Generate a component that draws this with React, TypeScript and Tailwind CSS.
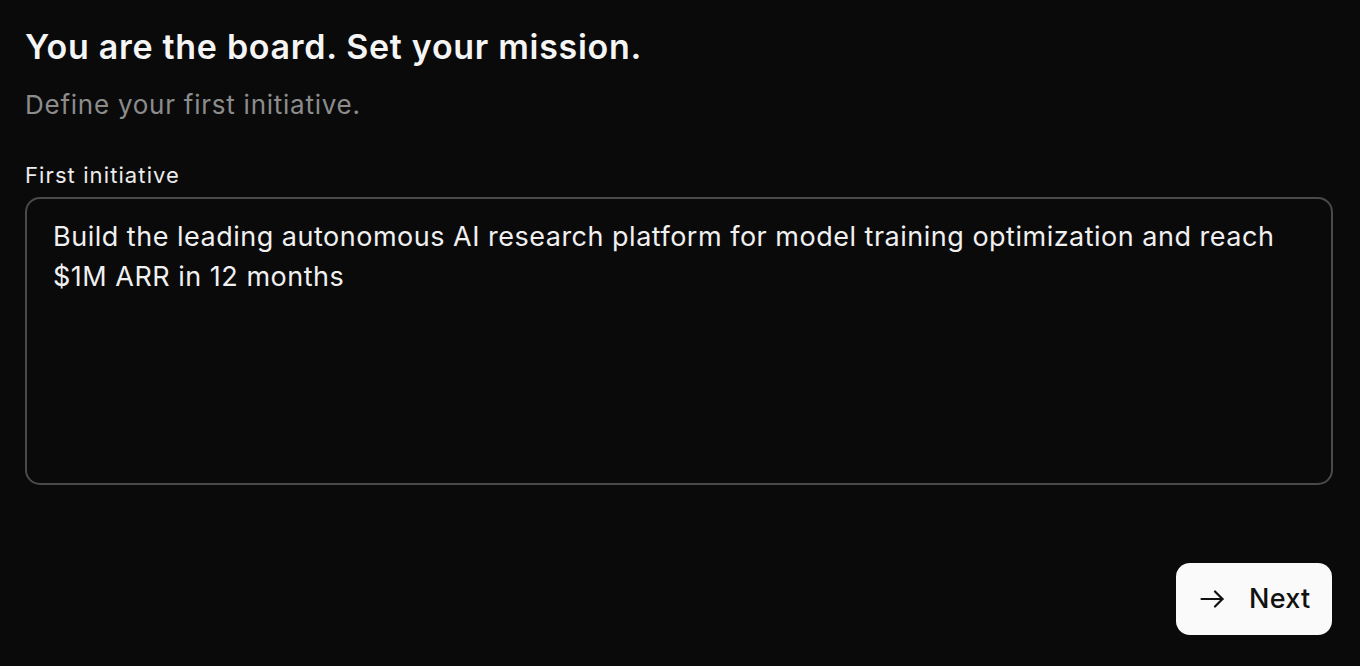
export default function App() {
  return (
    <div className="min-h-[666px] w-full bg-[#0a0a0a] px-[25px] pt-[27px] font-['Inter',sans-serif] text-[#f5f5f5]">
      <h1 className="text-[34px] leading-[40px] font-semibold tracking-[0.7px]">
        You are the board. Set your mission.
      </h1>
      <p className="mt-[22px] text-[26px] leading-[32px] tracking-[0.75px] text-[#8c8c8c]">
        Define your first initiative.
      </p>

      <label className="mt-[40px] block text-[22px] leading-[28px] tracking-[1.1px] text-[#ececec]">
        First initiative
      </label>
      <textarea
        className="mt-[8px] block h-[288px] w-[1308px] resize-none rounded-[15px] border-2 border-[#4a4a4a] bg-[#0a0a0a] px-[26px] pt-[18px] text-[27px] leading-[40px] tracking-[0.5px] text-[#f0f0f0] outline-none"
        defaultValue="Build the leading autonomous AI research platform for model training optimization and reach $1M ARR in 12 months"
      />

      <div className="mt-[78px] flex w-[1307px] justify-end">
        <button className="flex h-[72px] w-[156px] items-center gap-[25px] rounded-[14px] bg-[#fafafa] pl-[24px] text-[27px] font-medium tracking-[0.3px] text-[#111111]">
          <svg width="24" height="18" viewBox="0 0 24 18" fill="none" stroke="currentColor" strokeWidth="2.2" strokeLinecap="round" strokeLinejoin="round">
            <path d="M1.5 9h21" />
            <path d="M15 1.5 22.5 9 15 16.5" />
          </svg>
          <span>Next</span>
        </button>
      </div>
    </div>
  );
}
